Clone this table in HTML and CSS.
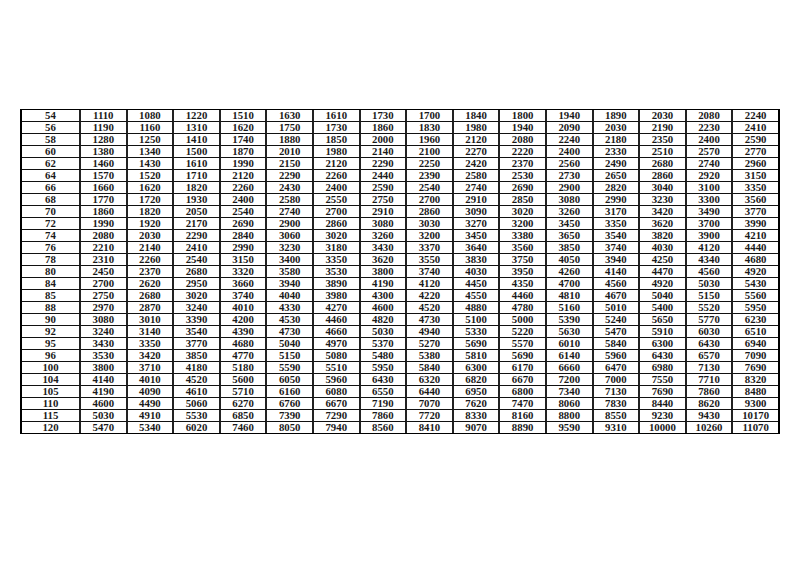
FILE: index.html
```html
<!DOCTYPE html>
<html>
<head>
<meta charset="utf-8">
<link rel="stylesheet" href="styles.css">
</head>
<body>
<table class="grid">
<colgroup><col class="c-first"><col span="14" class="c-val"><col class="c-last"></colgroup>
<tbody>
<tr><td>54</td><td>1110</td><td>1080</td><td>1220</td><td>1510</td><td>1630</td><td>1610</td><td>1730</td><td>1700</td><td>1840</td><td>1800</td><td>1940</td><td>1890</td><td>2030</td><td>2080</td><td>2240</td></tr>
<tr><td>56</td><td>1190</td><td>1160</td><td>1310</td><td>1620</td><td>1750</td><td>1730</td><td>1860</td><td>1830</td><td>1980</td><td>1940</td><td>2090</td><td>2030</td><td>2190</td><td>2230</td><td>2410</td></tr>
<tr><td>58</td><td>1280</td><td>1250</td><td>1410</td><td>1740</td><td>1880</td><td>1850</td><td>2000</td><td>1960</td><td>2120</td><td>2080</td><td>2240</td><td>2180</td><td>2350</td><td>2400</td><td>2590</td></tr>
<tr><td>60</td><td>1380</td><td>1340</td><td>1500</td><td>1870</td><td>2010</td><td>1980</td><td>2140</td><td>2100</td><td>2270</td><td>2220</td><td>2400</td><td>2330</td><td>2510</td><td>2570</td><td>2770</td></tr>
<tr><td>62</td><td>1460</td><td>1430</td><td>1610</td><td>1990</td><td>2150</td><td>2120</td><td>2290</td><td>2250</td><td>2420</td><td>2370</td><td>2560</td><td>2490</td><td>2680</td><td>2740</td><td>2960</td></tr>
<tr><td>64</td><td>1570</td><td>1520</td><td>1710</td><td>2120</td><td>2290</td><td>2260</td><td>2440</td><td>2390</td><td>2580</td><td>2530</td><td>2730</td><td>2650</td><td>2860</td><td>2920</td><td>3150</td></tr>
<tr><td>66</td><td>1660</td><td>1620</td><td>1820</td><td>2260</td><td>2430</td><td>2400</td><td>2590</td><td>2540</td><td>2740</td><td>2690</td><td>2900</td><td>2820</td><td>3040</td><td>3100</td><td>3350</td></tr>
<tr><td>68</td><td>1770</td><td>1720</td><td>1930</td><td>2400</td><td>2580</td><td>2550</td><td>2750</td><td>2700</td><td>2910</td><td>2850</td><td>3080</td><td>2990</td><td>3230</td><td>3300</td><td>3560</td></tr>
<tr><td>70</td><td>1860</td><td>1820</td><td>2050</td><td>2540</td><td>2740</td><td>2700</td><td>2910</td><td>2860</td><td>3090</td><td>3020</td><td>3260</td><td>3170</td><td>3420</td><td>3490</td><td>3770</td></tr>
<tr><td>72</td><td>1990</td><td>1920</td><td>2170</td><td>2690</td><td>2900</td><td>2860</td><td>3080</td><td>3030</td><td>3270</td><td>3200</td><td>3450</td><td>3350</td><td>3620</td><td>3700</td><td>3990</td></tr>
<tr><td>74</td><td>2080</td><td>2030</td><td>2290</td><td>2840</td><td>3060</td><td>3020</td><td>3260</td><td>3200</td><td>3450</td><td>3380</td><td>3650</td><td>3540</td><td>3820</td><td>3900</td><td>4210</td></tr>
<tr><td>76</td><td>2210</td><td>2140</td><td>2410</td><td>2990</td><td>3230</td><td>3180</td><td>3430</td><td>3370</td><td>3640</td><td>3560</td><td>3850</td><td>3740</td><td>4030</td><td>4120</td><td>4440</td></tr>
<tr><td>78</td><td>2310</td><td>2260</td><td>2540</td><td>3150</td><td>3400</td><td>3350</td><td>3620</td><td>3550</td><td>3830</td><td>3750</td><td>4050</td><td>3940</td><td>4250</td><td>4340</td><td>4680</td></tr>
<tr><td>80</td><td>2450</td><td>2370</td><td>2680</td><td>3320</td><td>3580</td><td>3530</td><td>3800</td><td>3740</td><td>4030</td><td>3950</td><td>4260</td><td>4140</td><td>4470</td><td>4560</td><td>4920</td></tr>
<tr><td>84</td><td>2700</td><td>2620</td><td>2950</td><td>3660</td><td>3940</td><td>3890</td><td>4190</td><td>4120</td><td>4450</td><td>4350</td><td>4700</td><td>4560</td><td>4920</td><td>5030</td><td>5430</td></tr>
<tr><td>85</td><td>2750</td><td>2680</td><td>3020</td><td>3740</td><td>4040</td><td>3980</td><td>4300</td><td>4220</td><td>4550</td><td>4460</td><td>4810</td><td>4670</td><td>5040</td><td>5150</td><td>5560</td></tr>
<tr><td>88</td><td>2970</td><td>2870</td><td>3240</td><td>4010</td><td>4330</td><td>4270</td><td>4600</td><td>4520</td><td>4880</td><td>4780</td><td>5160</td><td>5010</td><td>5400</td><td>5520</td><td>5950</td></tr>
<tr><td>90</td><td>3080</td><td>3010</td><td>3390</td><td>4200</td><td>4530</td><td>4460</td><td>4820</td><td>4730</td><td>5100</td><td>5000</td><td>5390</td><td>5240</td><td>5650</td><td>5770</td><td>6230</td></tr>
<tr><td>92</td><td>3240</td><td>3140</td><td>3540</td><td>4390</td><td>4730</td><td>4660</td><td>5030</td><td>4940</td><td>5330</td><td>5220</td><td>5630</td><td>5470</td><td>5910</td><td>6030</td><td>6510</td></tr>
<tr><td>95</td><td>3430</td><td>3350</td><td>3770</td><td>4680</td><td>5040</td><td>4970</td><td>5370</td><td>5270</td><td>5690</td><td>5570</td><td>6010</td><td>5840</td><td>6300</td><td>6430</td><td>6940</td></tr>
<tr><td>96</td><td>3530</td><td>3420</td><td>3850</td><td>4770</td><td>5150</td><td>5080</td><td>5480</td><td>5380</td><td>5810</td><td>5690</td><td>6140</td><td>5960</td><td>6430</td><td>6570</td><td>7090</td></tr>
<tr><td>100</td><td>3800</td><td>3710</td><td>4180</td><td>5180</td><td>5590</td><td>5510</td><td>5950</td><td>5840</td><td>6300</td><td>6170</td><td>6660</td><td>6470</td><td>6980</td><td>7130</td><td>7690</td></tr>
<tr><td>104</td><td>4140</td><td>4010</td><td>4520</td><td>5600</td><td>6050</td><td>5960</td><td>6430</td><td>6320</td><td>6820</td><td>6670</td><td>7200</td><td>7000</td><td>7550</td><td>7710</td><td>8320</td></tr>
<tr><td>105</td><td>4190</td><td>4090</td><td>4610</td><td>5710</td><td>6160</td><td>6080</td><td>6550</td><td>6440</td><td>6950</td><td>6800</td><td>7340</td><td>7130</td><td>7690</td><td>7860</td><td>8480</td></tr>
<tr><td>110</td><td>4600</td><td>4490</td><td>5060</td><td>6270</td><td>6760</td><td>6670</td><td>7190</td><td>7070</td><td>7620</td><td>7470</td><td>8060</td><td>7830</td><td>8440</td><td>8620</td><td>9300</td></tr>
<tr><td>115</td><td>5030</td><td>4910</td><td>5530</td><td>6850</td><td>7390</td><td>7290</td><td>7860</td><td>7720</td><td>8330</td><td>8160</td><td>8800</td><td>8550</td><td>9230</td><td>9430</td><td>10170</td></tr>
<tr><td>120</td><td>5470</td><td>5340</td><td>6020</td><td>7460</td><td>8050</td><td>7940</td><td>8560</td><td>8410</td><td>9070</td><td>8890</td><td>9590</td><td>9310</td><td>10000</td><td>10260</td><td>11070</td></tr>
</tbody>
</table>
</body>
</html>
```
FILE: styles.css
```css
html, body {
  margin: 0;
  padding: 0;
  background: #fff;
}
body {
  padding-top: 109px;
  padding-left: 20px;
}
.grid {
  border-collapse: separate;
  border-spacing: 0;
  table-layout: fixed;
  width: 760px;
  font-family: "Liberation Serif", "Times New Roman", serif;
  font-size: 10.8px;
  font-weight: bold;
  color: #1a1a1a;
  border-top: 1px solid #000;
  border-bottom: 1px solid #000;
  border-left: 2px solid #000;
  border-right: 2px solid #000;
}
.c-first { width: 59px; }
.c-val { width: 46.6px; }
.grid td {
  box-sizing: border-box;
  height: 12px;
  padding: 0;
  line-height: 11px;
  text-align: center;
  vertical-align: middle;
  border-right: 2px solid #222;
  border-bottom: 1px solid #111;
  white-space: nowrap;
}
.grid td:last-child {
  border-right: none;
}
.grid tr:last-child td {
  border-bottom: none;
  height: 11px;
}
```
